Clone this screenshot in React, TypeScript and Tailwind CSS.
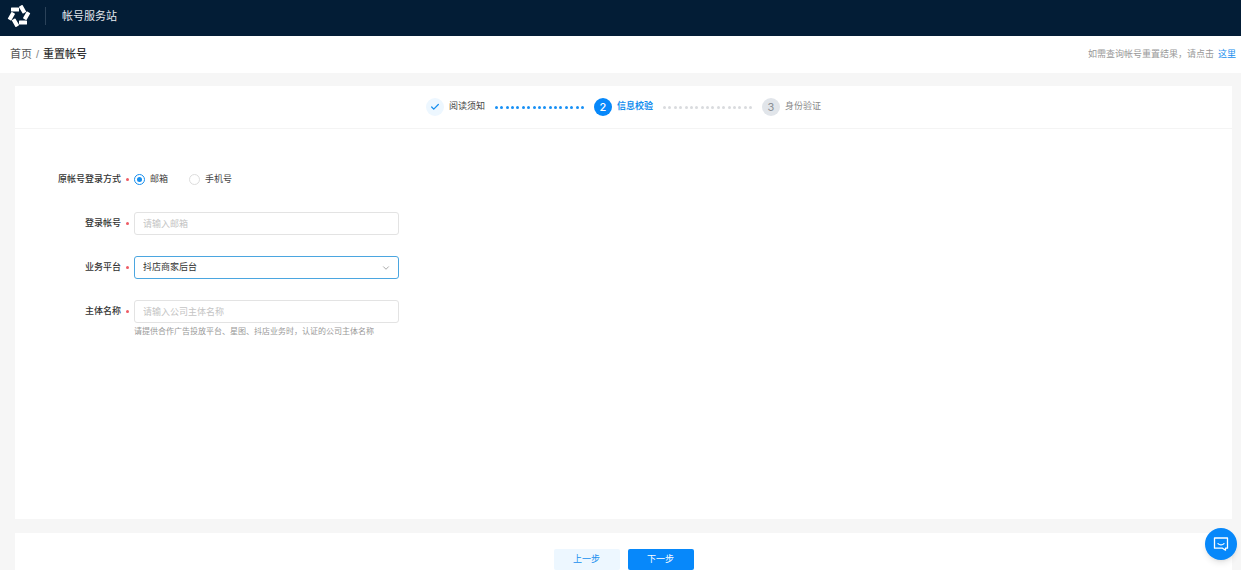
import { FormEvent, useState } from "react";
import clsx from "clsx";
import { Check, ChevronDown } from "lucide-react";

type StepStatus = "done" | "active" | "waiting";

type Step = {
  title: string;
  status: StepStatus;
};

const STEPS: Step[] = [
  { title: "阅读须知", status: "done" },
  { title: "信息校验", status: "active" },
  { title: "身份验证", status: "waiting" },
];

const LOGIN_TYPES = [
  { value: "email", label: "邮箱" },
  { value: "phone", label: "手机号" },
];

const PLATFORMS = ["抖店商家后台", "广告投放平台", "星图"];

const fieldClass =
  "h-[23px] w-full rounded-[3px] border bg-white px-2 text-[9px] text-[#333333] outline-none placeholder:text-[#c4c4c4]";

function Logo() {
  return (
    <svg className="size-6" viewBox="-12 -12 24 24" fill="#ffffff" aria-hidden>
      {[0, 60, 120, 180, 240, 300].map((angle) => (
        <rect
          key={angle}
          x="0"
          y="4.4"
          width="8"
          height="4.1"
          rx="0.6"
          transform={`rotate(${angle})`}
        />
      ))}
    </svg>
  );
}

function Header() {
  return (
    <header className="flex h-9 items-center bg-[#031d36] px-[7px] pb-1 text-[11px] text-[#e3e8ed]">
      <Logo />
      <span className="ml-3.5 h-[18px] w-px bg-[#2b4259]" />
      <span className="ml-4">帐号服务站</span>
    </header>
  );
}

function Breadcrumb() {
  return (
    <div className="flex h-[37px] items-center justify-between bg-white pr-[5px] pl-2.5">
      <nav className="flex gap-1 text-[11px]">
        <a href="#" className="text-[#555555]">
          首页
        </a>
        <span className="text-[#888888]">/</span>
        <span className="font-medium text-[#333333]">重置帐号</span>
      </nav>
      <p className="flex gap-1 text-[9px] text-[#999999]">
        如需查询帐号重置结果，请点击
        <a href="#" className="text-[#168eee]">
          这里
        </a>
      </p>
    </div>
  );
}

function Dots({ active }: { active: boolean }) {
  return (
    <span className="flex w-[89px] justify-between">
      {Array.from({ length: 17 }, (_, i) => (
        <i
          key={i}
          className={clsx(
            "size-[3px] rounded-full",
            active ? "bg-[#1890f5]" : "bg-[#d9dbde]"
          )}
        />
      ))}
    </span>
  );
}

function Steps() {
  return (
    <ol className="flex h-[43px] items-center justify-center gap-2.5 border-b border-[#f4f4f4] text-[9px]">
      {STEPS.map(({ title, status }, i) => (
        <li key={title} className="flex items-center gap-2.5">
          {i > 0 && <Dots active={STEPS[i - 1].status === "done"} />}
          <span className="flex items-center gap-[5px]">
            <span
              className={clsx(
                "flex size-[18px] items-center justify-center rounded-full font-['Inter',sans-serif] text-[11px]",
                status === "done" && "bg-[#edf7ff] text-[#168eee]",
                status === "active" && "bg-[#0788fa] font-medium text-white",
                status === "waiting" && "bg-[#e1e5ea] text-[#8b8f94]"
              )}
            >
              {status === "done" ? <Check size={10} strokeWidth={3} /> : i + 1}
            </span>
            <span
              className={clsx(
                status === "done" && "text-[#444444]",
                status === "active" && "font-bold text-[#168eee]",
                status === "waiting" && "text-[#888888]"
              )}
            >
              {title}
            </span>
          </span>
        </li>
      ))}
    </ol>
  );
}

function Required() {
  return <i className="mr-[5px] ml-[5px] size-[3px] rounded-full bg-[#ee5b64]" />;
}

type LabelProps = {
  text: string;
  htmlFor?: string;
  id?: string;
};

function FieldLabel({ text, htmlFor, id }: LabelProps) {
  return (
    <label
      id={id}
      htmlFor={htmlFor}
      className="flex h-[23px] w-[119px] shrink-0 items-center justify-end font-medium text-[#333333]"
    >
      {text}
      <Required />
    </label>
  );
}

function AccountForm() {
  const [loginType, setLoginType] = useState("email");
  const [account, setAccount] = useState("");
  const [platform, setPlatform] = useState(PLATFORMS[0]);
  const [company, setCompany] = useState("");

  const handleSubmit = (e: FormEvent) => {
    e.preventDefault();
  };

  return (
    <form
      id="account-form"
      className="flex flex-col gap-[21px] pt-[39px] pb-10 text-[9px]"
      onSubmit={handleSubmit}
    >
      <div className="flex" role="radiogroup" aria-labelledby="login-type">
        <FieldLabel id="login-type" text="原帐号登录方式" />
        <div className="flex items-center gap-[21px]">
          {LOGIN_TYPES.map(({ value, label }) => (
            <label key={value} className="flex items-center gap-[5px] text-[#444444]">
              <input
                type="radio"
                name="loginType"
                value={value}
                checked={loginType === value}
                onChange={() => setLoginType(value)}
                className="size-[11px] appearance-none rounded-full border border-[#dddddd] bg-white checked:border-[#168eee] checked:bg-[#168eee] checked:bg-clip-content checked:p-0.5"
              />
              {label}
            </label>
          ))}
        </div>
      </div>
      <div className="flex">
        <FieldLabel htmlFor="account" text="登录帐号" />
        <div className="w-full max-w-[265px]">
          <input
            id="account"
            className={clsx(fieldClass, "border-[#e3e3e3]")}
            placeholder={loginType === "email" ? "请输入邮箱" : "请输入手机号"}
            value={account}
            onChange={(e) => setAccount(e.target.value)}
          />
        </div>
      </div>
      <div className="flex">
        <FieldLabel htmlFor="platform" text="业务平台" />
        <div className="relative w-full max-w-[265px]">
          <select
            id="platform"
            className={clsx(fieldClass, "appearance-none border-[#4ba6e0]")}
            value={platform}
            onChange={(e) => setPlatform(e.target.value)}
          >
            {PLATFORMS.map((name) => (
              <option key={name}>{name}</option>
            ))}
          </select>
          <ChevronDown
            size={10}
            className="pointer-events-none absolute top-[7px] right-2 text-[#999999]"
          />
        </div>
      </div>
      <div className="flex">
        <FieldLabel htmlFor="company" text="主体名称" />
        <div className="w-full max-w-[265px]">
          <input
            id="company"
            className={clsx(fieldClass, "border-[#e3e3e3]")}
            placeholder="请输入公司主体名称"
            value={company}
            onChange={(e) => setCompany(e.target.value)}
          />
          <p className="mt-[3px] text-[8px] leading-3 whitespace-nowrap text-[#999999]">
            请提供合作广告投放平台、星图、抖店业务时，认证的公司主体名称
          </p>
        </div>
      </div>
    </form>
  );
}

function ChatButton() {
  return (
    <button
      type="button"
      aria-label="在线客服"
      className="fixed right-1 bottom-2.5 flex size-8 items-center justify-center rounded-full bg-[#0788fa] shadow-md"
    >
      <svg
        className="size-4"
        viewBox="0 0 16 16"
        fill="none"
        stroke="#ffffff"
        strokeWidth="1.3"
        strokeLinejoin="round"
        strokeLinecap="round"
      >
        <path d="M1.5 2h13v10.2h-2v2l-3-2h-8z" />
        <path d="M5 7.6c1.6 1.5 4.4 1.5 6 0" />
      </svg>
    </button>
  );
}

export default function App() {
  return (
    <div
      lang="zh-CN"
      className="flex min-h-screen flex-col bg-[#f6f6f6] font-['Liberation_Sans','Noto_Sans_CJK_SC',sans-serif]"
    >
      <Header />
      <Breadcrumb />
      <main className="flex flex-1 flex-col gap-3.5 pt-[13px] pr-[9px] pl-[15px]">
        <section className="flex-1 bg-white">
          <Steps />
          <AccountForm />
        </section>
        <div className="flex justify-center gap-2 bg-white pt-4 text-[9px]">
          <button
            type="button"
            className="h-[21px] w-[66px] rounded-xs bg-[#edf7ff] text-[#168eee]"
          >
            上一步
          </button>
          <button
            type="submit"
            form="account-form"
            className="h-[21px] w-[66px] rounded-xs bg-[#0788fa] text-white"
          >
            下一步
          </button>
        </div>
      </main>
      <ChatButton />
    </div>
  );
}
